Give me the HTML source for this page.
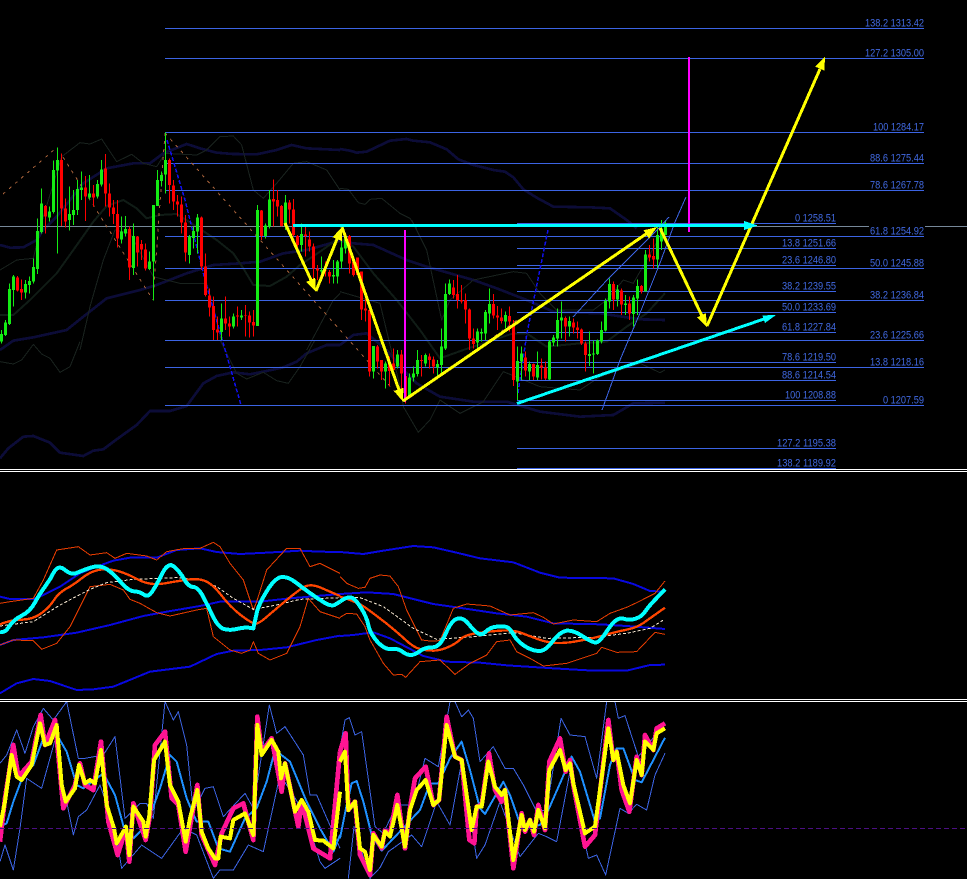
<!DOCTYPE html>
<html><head><meta charset="utf-8"><title>Chart</title>
<style>
html,body{margin:0;padding:0;background:#000;width:967px;height:879px;overflow:hidden}
svg{display:block;position:absolute;left:0;top:0}
text{font-family:"Liberation Sans",sans-serif;font-size:11px;fill:#4169e1}
</style></head><body>
<svg width="967" height="879" viewBox="0 0 967 879" xmlns="http://www.w3.org/2000/svg">
<rect width="967" height="879" fill="#000"/>
<g fill="none" stroke-linejoin="round" shape-rendering="crispEdges">

<!-- dim lines left -->
<g transform="translate(0,120) scale(.33333)">
<polyline stroke="#0c0c38" stroke-width="8" points="0,375 30,383 70,382 110,360 130,330 170,290 250,190 320,145 400,130 450,130 490,100 560,72 600,85 650,98 700,102 770,103 830,90 875,75 920,85 1020,90"/>
<polyline stroke="#0c0c38" stroke-width="8" points="0,690 40,662 100,652 200,630 250,590 320,535 420,510 470,495 560,460 640,435 720,430 780,425 850,400 920,390 1020,362"/>
<polyline stroke="#101c16" stroke-width="6" points="0,585 40,585 90,540 170,460 220,390 280,305 320,258 370,240 410,265 440,295 480,285 530,282 590,320 650,360 700,400 730,445 760,495 810,498 860,470 900,435 960,395 1020,352"/>
<g stroke="#19221e" stroke-width="3">
<polyline points="0,450 50,420 100,415 130,290 185,110 240,68 270,72 305,57 350,125 395,103 430,130 470,140 495,100 590,105 620,90 660,50 700,48 725,75 760,210 790,235 830,190 880,130 920,125 980,150 1020,210"/>
<polyline points="240,690 270,560 310,420 345,330 390,340 460,470 540,490 620,490 640,560 665,665"/>
<polyline points="920,690 1000,540 1020,520"/>
</g>
</g>
<!-- dim lines, lower-left extension -->
<g transform="translate(0,340) scale(.33333)">
<polyline stroke="#0c0c38" stroke-width="8" points="0,355 25,325 70,290 100,288 150,308 180,338 250,348 280,332 310,328 350,298 410,255 450,213 510,213 560,198 610,130 650,108 700,97 750,103 790,95 850,82 890,65 920,40 980,15 1020,15"/>
<g stroke="#19221e" stroke-width="3">
<polyline points="0,65 40,72 65,60 100,13 125,42 150,55 180,97 210,80 240,5"/>
<polyline points="660,0 710,100 740,117 790,97 830,122 865,130 900,80 945,0"/>
</g>
</g>
<!-- dim lines, upper extension -->
<g transform="translate(340,100) scale(.33333)">
<polyline stroke="#0c0c38" stroke-width="8" points="0,147 30,152 50,158 80,155 150,122 200,117 220,122 270,127 320,148 355,178 400,195 460,210 495,215 520,232 550,268 590,293 640,320 750,322 810,325 860,360 890,385"/>
<polyline stroke="#19221e" stroke-width="3" points="0,265 25,268 55,308 75,313 90,298 125,295 180,340 210,355 230,385"/>
</g>
<g transform="translate(340,220) scale(.33333)">
<polyline stroke="#0c0c38" stroke-width="8" points="0,62 40,70 100,75 200,120 260,140 400,180 470,205 560,240 640,275 780,280 900,298 975,300"/>
<polyline stroke="#0c0c38" stroke-width="8" points="0,375 40,345 80,340 140,390 190,450 230,490 300,530 400,545 500,545 600,575 720,590 820,585 880,550 975,548"/>
<polyline stroke="#101c16" stroke-width="6" points="0,55 40,80 100,160 170,240 240,330 300,415 370,390 520,340 560,340 620,380 720,370 800,365 860,320 920,280 975,220"/>
<polyline stroke="#19221e" stroke-width="3" points="215,0 260,90 305,300 330,240 400,180 520,155 560,160 600,220 650,270 760,270 800,240 850,180 880,190 960,50"/>
<polyline stroke="#19221e" stroke-width="3" points="0,215 120,250 180,500 190,560 235,637 270,600 300,540 360,580 430,545 490,455 600,500 720,510 780,470 900,430 960,458 975,450"/>
</g>

<!-- gray price line -->
<path d="M0 226.5H967" stroke="#778899" stroke-width="1"/>
<rect x="869" y="222" width="56" height="8" fill="#000" stroke="none"/>

<!-- fib lines -->
<path stroke="#3c64e4" stroke-width="1" d="M165 28.5H924M165 58.5H924M165 132.5H924M165 163.5H924M165 190.5H924M165 236.5H924M165 268.5H924M165 300.5H924M165 340.5H924M165 367.5H924M165 405.5H924M517 223.5H836M517 248.5H836M517 265.5H836M517 291.5H836M517 312.5H836M517 332.5H836M517 362.5H836M517 380.5H836M517 400.5H836M517 448.5H836M517 468.5H836"/>

<!-- dashed -->
<path stroke="#a8623a" stroke-width="1" stroke-dasharray="3 5" d="M3 194L55 149M63 157L153 300M165 133L153 300M165 133L340 330L404 402L517 320"/>
<path stroke="#1010f0" stroke-width="1.5" stroke-dasharray="4 2" d="M167 140L185 200L205 280L241 405M518 393L527 333L548 230"/>

<!-- candles left -->
<g transform="translate(0,120) scale(.33333)">
<path stroke="#14ec14" stroke-width="3" d="M4 630V670M16 600V648M28 490V615M40 465V560M76 480V535M88 470V520M100 415V490M112 295V462M124 205V340M148 260V305M160 122V280M172 82V400M208 200V332M220 210V315M232 180V285M244 155V240M268 165V238M292 180V235M304 120V200M364 290V370M376 288V350M400 310V465M448 395V450M460 255V542M472 150V258M484 155V200M496 37V220M568 345V430M580 320V385M592 282V400M664 550V660M700 580V625M724 570V600M772 255V618M796 310V355M808 210V325M856 225V330M904 310V395M964 410V480M1000 420V490M1012 420V490"/>
<path stroke="#14ec14" stroke-width="9" d="M4 642V665M16 608V645M28 507V612M40 470V510M76 492V518M88 483V495M100 441V485M112 333V447M124 250V336M148 274V292M160 150V276M172 120V152M208 282V300M220 270V285M232 207V270M244 202V210M268 220V232M292 192V230M304 148V194M364 335V358M376 327V340M400 348V444M448 424V447M460 255V425M472 180V258M484 165V183M496 120V164M568 350V405M580 333V354M592 292V335M664 595V636M700 590V620M724 586V592M772 270V618M796 316V348M808 238V320M856 247V318M904 342V375M964 450V455M1000 465V470M1012 424V470"/>
<path stroke="#ff0000" stroke-width="3" d="M52 468V515M64 478V540M136 255V340M184 100V318M196 235V322M256 168V303M280 195V260M316 102V260M328 190V290M340 240V312M352 240V382M388 320V480M412 348V440M424 360V420M436 370V452M508 115V250M520 180V270M532 225V290M544 230V340M556 285V425M604 290V450M616 400V530M628 505V590M640 530V660M652 590V660M676 530V630M688 590V650M712 560V620M736 555V650M748 575V652M760 570V650M784 270V360M820 178V320M832 210V290M844 255V320M868 240V310M880 237V350M892 345V400M916 320V410M928 335V395M940 370V480M952 435V480M976 425V470M988 450V490"/>
<path stroke="#ff0000" stroke-width="9" d="M52 472V512M64 507V518M136 258V290M184 120V265M196 265V305M256 202V230M280 220V232M316 145V220M328 220V262M340 262V282M352 282V356M388 327V442M412 349V398M424 372V388M436 388V445M508 120V195M520 196V245M532 244V254M544 254V308M556 308V397M604 292V440M616 440V525M628 526V562M640 558V630M652 628V638M676 595V610M688 610V620M712 587V590M736 586V588M748 586V608M760 606V616M784 272V348M820 237V245M832 240V260M844 258V318M868 247V268M880 268V345M892 348V375M916 343V348M928 358V380M940 380V445M952 445V452M976 450V452M988 456V470"/>
</g>
<!-- candles right -->
<g transform="translate(340,220) scale(.33333)">
<path stroke="#14ec14" stroke-width="3" d="M4 25V145M16 45V100M100 378V475M136 425V505M172 390V445M208 460V535M220 440V485M232 390V470M256 400V440M292 420V470M304 325V460M316 190V390M328 178V225M412 325V395M424 325V365M436 270V360M448 205V310M496 275V325M532 380V540M544 380V480M568 425V480M592 395V480M628 360V480M640 345V378M652 265V380M664 245V355M688 290V350M748 335V438M760 362V460M772 358V405M784 305V370M796 235V335M808 175V265M832 195V260M856 225V285M880 225V320M892 178V285M916 90V215M952 20V150M964 0V90M976 0V45"/>
<path stroke="#14ec14" stroke-width="9" d="M4 82V125M16 50V85M100 378V455M136 430V455M172 403V440M208 472V530M220 460V472M232 420V462M256 405V430M292 432V442M304 380V435M316 222V385M328 190V222M412 335V368M424 336V340M436 276V340M448 252V280M496 285V305M532 423V485M544 400V425M568 432V455M592 435V472M628 365V478M640 352V368M652 300V355M664 292V302M688 303V320M748 402V408M760 400V404M772 362V402M784 330V364M796 243V332M808 192V245M832 208V238M856 250V255M880 232V282M892 198V236M916 103V214M952 45V118M964 25V65M976 10V45"/>
<path stroke="#ff0000" stroke-width="3" d="M28 45V160M40 110V170M52 112V165M64 155V300M76 235V305M88 270V470M112 375V445M124 420V480M148 410V500M160 385V450M184 390V510M196 455V550M244 405V470M268 400V445M280 410V460M340 180V235M352 165V265M364 195V250M376 220V310M388 265V390M400 325V385M460 222V295M472 258V330M484 265V310M508 260V335M520 300V498M556 395V470M580 430V480M604 415V478M616 425V480M676 290V365M700 295V340M712 305V355M724 325V375M736 365V455M820 185V270M844 205V285M868 230V300M904 195V220M928 75V125M940 55V145"/>
<path stroke="#ff0000" stroke-width="9" d="M28 48V130M40 125V165M52 112V165M64 155V268M76 265V272M88 270V455M112 380V425M124 420V455M148 430V453M160 430V450M184 403V460M196 468V530M244 420V423M268 410V420M280 418V440M340 202V225M352 222V240M364 240V245M376 240V268M388 268V355M400 355V372M460 252V287M472 287V293M484 293V303M508 288V305M520 318V480M556 412V452M580 432V470M604 437V443M616 442V475M676 294V320M700 307V322M712 322V330M724 328V370M736 370V405M820 192V238M844 212V253M868 250V280M904 198V214M928 103V113M940 108V118"/>
</g>

<!-- thin fan lines -->
<path stroke="#3c64e4" stroke-width="1" d="M602 410L620 360L640 313L660 263L675 222L686 197"/>
<path stroke="#3c64e4" stroke-width="1" d="M573 317L607 280L660 227L669 217"/>

<!-- magenta -->
<path stroke="#ff00ff" stroke-width="2" d="M405 230V402M689 57V232"/>
</g>

<!-- arrows -->
<g shape-rendering="crispEdges">
<g fill="none" stroke-width="3" stroke="#ffff00">
<path d="M285 223L311 280M316 291L337 239M342 227L399 390M403 401L646 234M660 228L702 316M707 326L820 69"/>
</g>
<path stroke="#00ffff" stroke-width="3" fill="none" d="M293 225.5H746M517 403.5L764 319"/>
<g fill="#00ffff"><polygon points="758,225.5 744,221 744,230"/><polygon points="776,315 762.4,315.4 765,323"/></g>
<g fill="#ffff00"><polygon points="316,291.7 315.2,277.8 306.1,282"/><polygon points="342,227 341.8,241 332.6,237.2"/><polygon points="403,401.7 403.4,387.8 394,391"/><polygon points="657,227 649.1,238.5 643.5,230.3"/><polygon points="707,327 705.9,313.2 696.9,317.4"/><polygon points="825,56.7 824.4,70.6 815.2,66.6"/></g>
</g>

<!-- labels -->
<g>
<text x="865" y="26.5" textLength="59" lengthAdjust="spacingAndGlyphs">138.2 1313.42</text>
<text x="865" y="56.5" textLength="59" lengthAdjust="spacingAndGlyphs">127.2 1305.00</text>
<text x="873" y="130.5" textLength="51" lengthAdjust="spacingAndGlyphs">100 1284.17</text>
<text x="870" y="161.5" textLength="54" lengthAdjust="spacingAndGlyphs">88.6 1275.44</text>
<text x="870" y="188.5" textLength="54" lengthAdjust="spacingAndGlyphs">78.6 1267.78</text>
<text x="870" y="234.5" textLength="54" lengthAdjust="spacingAndGlyphs">61.8 1254.92</text>
<text x="870" y="266.5" textLength="54" lengthAdjust="spacingAndGlyphs">50.0 1245.88</text>
<text x="870" y="298.5" textLength="54" lengthAdjust="spacingAndGlyphs">38.2 1236.84</text>
<text x="870" y="338.5" textLength="54" lengthAdjust="spacingAndGlyphs">23.6 1225.66</text>
<text x="870" y="365.5" textLength="54" lengthAdjust="spacingAndGlyphs">13.8 1218.16</text>
<text x="883" y="403.5" textLength="41" lengthAdjust="spacingAndGlyphs">0 1207.59</text>
<text x="795" y="221.5" textLength="41" lengthAdjust="spacingAndGlyphs">0 1258.51</text>
<text x="782" y="246.5" textLength="54" lengthAdjust="spacingAndGlyphs">13.8 1251.66</text>
<text x="782" y="263.5" textLength="54" lengthAdjust="spacingAndGlyphs">23.6 1246.80</text>
<text x="782" y="289.5" textLength="54" lengthAdjust="spacingAndGlyphs">38.2 1239.55</text>
<text x="782" y="310.5" textLength="54" lengthAdjust="spacingAndGlyphs">50.0 1233.69</text>
<text x="782" y="330.5" textLength="54" lengthAdjust="spacingAndGlyphs">61.8 1227.84</text>
<text x="782" y="360.5" textLength="54" lengthAdjust="spacingAndGlyphs">78.6 1219.50</text>
<text x="782" y="378.5" textLength="54" lengthAdjust="spacingAndGlyphs">88.6 1214.54</text>
<text x="785" y="398.5" textLength="51" lengthAdjust="spacingAndGlyphs">100 1208.88</text>
<text x="777" y="446.5" textLength="59" lengthAdjust="spacingAndGlyphs">127.2 1195.38</text>
<text x="777" y="466.5" textLength="59" lengthAdjust="spacingAndGlyphs">138.2 1189.92</text>
</g>

<!-- panel 2 -->
<g fill="none" stroke-linejoin="round" shape-rendering="crispEdges">
<g transform="translate(0,530) scale(.33333)">
<g stroke="#0808e0" stroke-width="6">
<polyline points="0,200 30,207 100,207 130,195 180,170 240,130 290,110 340,92 390,83 470,83 530,60 600,55 650,66 720,72 800,68 900,62 960,65 1020,66"/>
<polyline points="0,345 40,330 130,322 230,308 330,285 430,258 500,245 600,228 660,215 780,215 870,205 1020,192"/>
<polyline points="0,490 50,460 100,447 150,453 230,480 280,478 340,470 450,425 570,410 650,372 700,362 780,360 860,352 950,330 1020,317"/>
</g>
<g stroke="#e63c00" stroke-width="3">
<polyline points="0,220 30,215 100,205 130,150 170,60 235,50 270,75 320,68 345,85 380,70 440,78 470,90 500,65 550,56 600,55 640,37 660,50 690,100 730,150 760,240 770,215 800,120 860,55 900,55 930,110 960,100 1020,130"/>
<polyline points="0,345 40,330 100,332 125,358 170,340 210,290 270,170 330,163 370,180 390,208 420,220 470,248 510,258 590,240 620,235 640,320 690,360 725,370 750,360 760,335 775,370 810,390 860,370 900,290 925,205 960,245 1020,265"/>
</g>
<polyline stroke="#f5e6d0" stroke-width="3" stroke-dasharray="9 6" points="0,288 100,275 180,225 270,178 320,158 400,148 530,143 600,148 650,170 700,205 760,238 830,225 900,208 1020,203"/>
<path stroke="#ff4500" stroke-width="7" d="M0,283 Q30,270 65,269 Q100,268 125,249 Q150,230 162,210 Q175,190 197,177 Q220,165 245,145 Q270,125 295,120 Q320,115 350,122 Q380,130 415,149 Q450,168 495,160 Q540,152 570,148 Q600,145 620,155 Q640,165 665,197 Q690,230 722,255 Q755,280 765,281 Q775,283 802,259 Q830,235 860,210 Q890,185 910,172 Q930,160 960,172 Q990,185 1020,198"/>
<path stroke="#00ffff" stroke-width="12" d="M0,305 Q15,310 27,290 Q40,270 65,257 Q90,245 105,217 Q120,190 135,170 Q150,150 162,126 Q175,103 195,120 Q215,137 232,128 Q250,120 275,112 Q300,105 320,117 Q340,130 362,156 Q385,183 402,184 Q420,185 432,194 Q445,203 457,184 Q470,165 487,130 Q505,95 522,110 Q540,125 552,147 Q565,170 580,171 Q595,172 610,201 Q625,230 640,261 Q655,292 672,297 Q690,302 710,297 Q730,292 745,293 L760,295 L770,250 Q775,225 800,184 Q825,143 845,141 Q865,140 887,157 Q910,175 927,187 Q945,200 970,216 Q995,232 1007,223 L1020,215"/>
</g>
<g transform="translate(340,530) scale(.33333)">
<g stroke="#0808e0" stroke-width="6">
<polyline points="0,66 70,72 130,62 220,48 280,52 350,68 420,85 520,97 600,128 660,143 820,145 880,162 930,183 975,185"/>
<polyline points="0,192 80,187 160,192 280,222 370,235 470,250 560,260 640,280 780,283 860,288 975,297"/>
<polyline points="0,318 40,315 100,307 150,325 250,378 320,395 420,398 500,406 640,415 760,422 860,422 930,405 975,404"/>
</g>
<g stroke="#e63c00" stroke-width="3">
<polyline points="0,140 20,160 55,175 75,172 90,145 120,135 150,138 175,170 200,240 245,330 270,333 300,332 340,235 380,222 450,228 510,255 580,248 610,262 640,282 700,270 770,275 810,250 860,232 890,218 945,190 975,153"/>
<polyline points="0,262 20,250 50,252 75,290 90,330 130,400 160,435 185,433 197,442 240,395 300,390 345,433 390,400 440,375 470,335 510,330 530,365 570,385 610,408 680,400 770,370 785,352 830,367 890,365 945,307 975,313"/>
</g>
<polyline stroke="#f5e6d0" stroke-width="3" stroke-dasharray="9 6" points="0,200 60,203 130,230 220,295 290,328 400,320 520,308 620,325 760,322 860,310 930,295 970,270"/>
<path stroke="#ff4500" stroke-width="7" d="M0,200 Q50,215 75,232 Q100,250 135,277 Q170,305 195,328 Q220,352 240,357 Q260,362 280,362 Q300,362 325,351 Q350,340 362,327 Q375,315 407,310 Q440,305 480,302 Q520,300 540,307 Q560,315 590,326 Q620,338 650,339 Q680,340 720,332 Q760,325 795,315 Q830,305 860,299 Q890,293 910,279 Q930,265 975,233"/>
<path stroke="#00ffff" stroke-width="12" d="M0,215 Q20,200 32,202 Q45,205 62,232 Q80,260 85,285 Q90,310 112,335 Q135,360 155,357 Q175,355 187,365 Q200,375 212,375 Q225,375 240,363 Q255,352 277,352 Q300,352 317,311 Q335,270 352,266 Q370,262 385,281 Q400,300 412,309 Q425,318 437,305 Q450,292 470,290 Q490,288 500,291 Q510,295 520,313 Q530,332 552,347 Q575,362 595,363 Q615,365 637,335 Q660,305 680,302 Q700,300 730,320 Q760,340 770,337 Q780,335 805,297 Q830,260 850,266 Q870,272 887,266 Q905,260 915,245 Q925,230 950,204 L975,178"/>
</g>

<!-- panel 3 -->
<g transform="translate(0,695) scale(.33333)">
<g stroke="#3c64e4" stroke-width="3">
<polyline points="0,205 20,180 50,105 75,175 100,95 130,40 160,75 200,20 235,190 255,190 310,180 345,125 375,370 420,325 440,325 460,370 495,20 520,75 535,50 560,150 580,350 615,280 640,275 670,365 735,295 760,340 808,30 830,115 855,95 910,180 930,300 950,300 1020,460"/>
<polyline points="0,500 15,450 40,525 60,400 80,250 125,280 165,135 190,270 220,420 235,365 260,345 300,270 345,400 365,520 425,450 485,490 550,400 590,420 640,550 660,525 700,525 745,450 790,470 840,240 880,300 920,370 960,500 975,520 1020,490"/>
</g>
<polyline stroke="#1e90ff" stroke-width="6" points="0,395 20,385 40,320 70,240 100,210 130,130 165,110 200,170 230,270 250,280 310,235 345,300 375,410 400,430 440,390 480,280 510,180 530,200 560,310 590,380 625,380 655,460 690,470 735,370 770,340 800,260 825,165 870,200 920,320 960,400 1000,470 1020,420"/>
<polyline stroke="#ff1493" stroke-width="14" points="0,440 15,310 40,150 55,245 95,200 122,60 135,150 165,75 190,340 225,270 240,205 255,270 280,285 303,140 325,380 353,480 378,400 388,500 400,325 437,435 450,360 465,150 495,110 515,310 535,330 557,470 592,270 605,420 645,510 665,415 700,340 730,325 760,435 772,65 785,170 815,130 845,290 855,205 895,395 905,320 940,460 990,490 1020,170"/>
<polyline stroke="#ffff00" stroke-width="12" points="0,395 15,320 35,180 50,245 65,255 95,210 120,85 135,150 150,145 170,90 185,270 197,320 225,280 237,210 255,265 270,255 285,265 303,165 320,330 342,400 350,445 378,395 388,480 400,335 430,380 437,425 448,360 462,195 495,140 510,270 535,320 557,440 570,370 592,285 605,410 625,460 645,490 655,490 662,425 690,430 700,375 735,355 760,420 772,90 785,180 815,135 835,170 843,250 855,205 885,350 905,315 925,350 945,435 970,437 1000,460 1020,290"/>
</g>
<g transform="translate(340,695) scale(.33333)">
<g stroke="#3c64e4" stroke-width="3">
<polyline points="0,160 15,75 28,68 45,120 65,110 105,395 130,415 170,330 220,330 255,190 295,215 330,20 345,20 365,65 385,45 400,70 420,200 460,155 495,220 520,220 550,270 590,350 620,345 663,70 690,120 735,125 770,250 800,20 825,20 835,70 855,62 895,185 950,115 975,85"/>
<polyline points="25,550 42,395 90,550 120,518 145,470 215,420 245,455 290,320 330,390 365,200 410,490 435,450 480,320 540,485 595,415 620,425 650,440 690,230 745,490 770,480 797,540 840,340 865,355 890,328 920,345 945,240 975,175"/>
</g>
<polyline stroke="#1e90ff" stroke-width="6" points="0,430 20,330 35,265 50,258 70,320 95,420 125,467 170,420 240,345 270,265 295,265 330,190 365,140 390,225 420,340 435,357 490,260 510,300 545,400 600,390 625,345 695,185 720,230 765,380 780,370 810,210 830,160 850,160 885,255 905,262 975,128"/>
<polyline stroke="#ff1493" stroke-width="14" points="0,170 17,115 25,345 45,320 60,480 90,540 100,415 125,460 135,405 150,420 172,300 195,460 210,340 225,250 257,215 280,330 297,315 320,65 345,185 365,195 388,435 403,445 410,335 425,330 447,175 465,285 485,320 495,285 520,520 545,355 555,410 570,375 582,420 595,330 615,405 628,200 660,130 677,230 690,195 700,270 735,455 765,420 805,75 820,195 830,170 845,285 868,350 890,185 905,240 915,120 940,165 950,100 975,85"/>
<polyline stroke="#ffff00" stroke-width="12" points="0,200 15,170 25,345 45,320 60,460 75,470 90,525 100,420 125,455 135,410 150,425 172,330 195,455 210,345 230,285 257,255 280,330 297,315 320,90 345,185 365,195 395,405 410,335 425,335 445,200 465,275 485,300 495,285 520,495 545,360 555,405 570,375 582,410 595,345 615,400 628,225 660,165 677,225 690,205 700,265 735,415 765,395 805,100 820,195 830,170 850,270 870,325 890,195 905,240 915,140 940,165 950,115 975,100"/>
</g>
<path stroke="#4b0f82" stroke-width="1" stroke-dasharray="5 3" d="M0 828.5H967"/>

<!-- separators -->
<path stroke="#fff" stroke-width="1" d="M0 469.5H967M0 471.5H967M0 699.5H967M0 701.5H967"/>
</g>
</svg>
</body></html>
